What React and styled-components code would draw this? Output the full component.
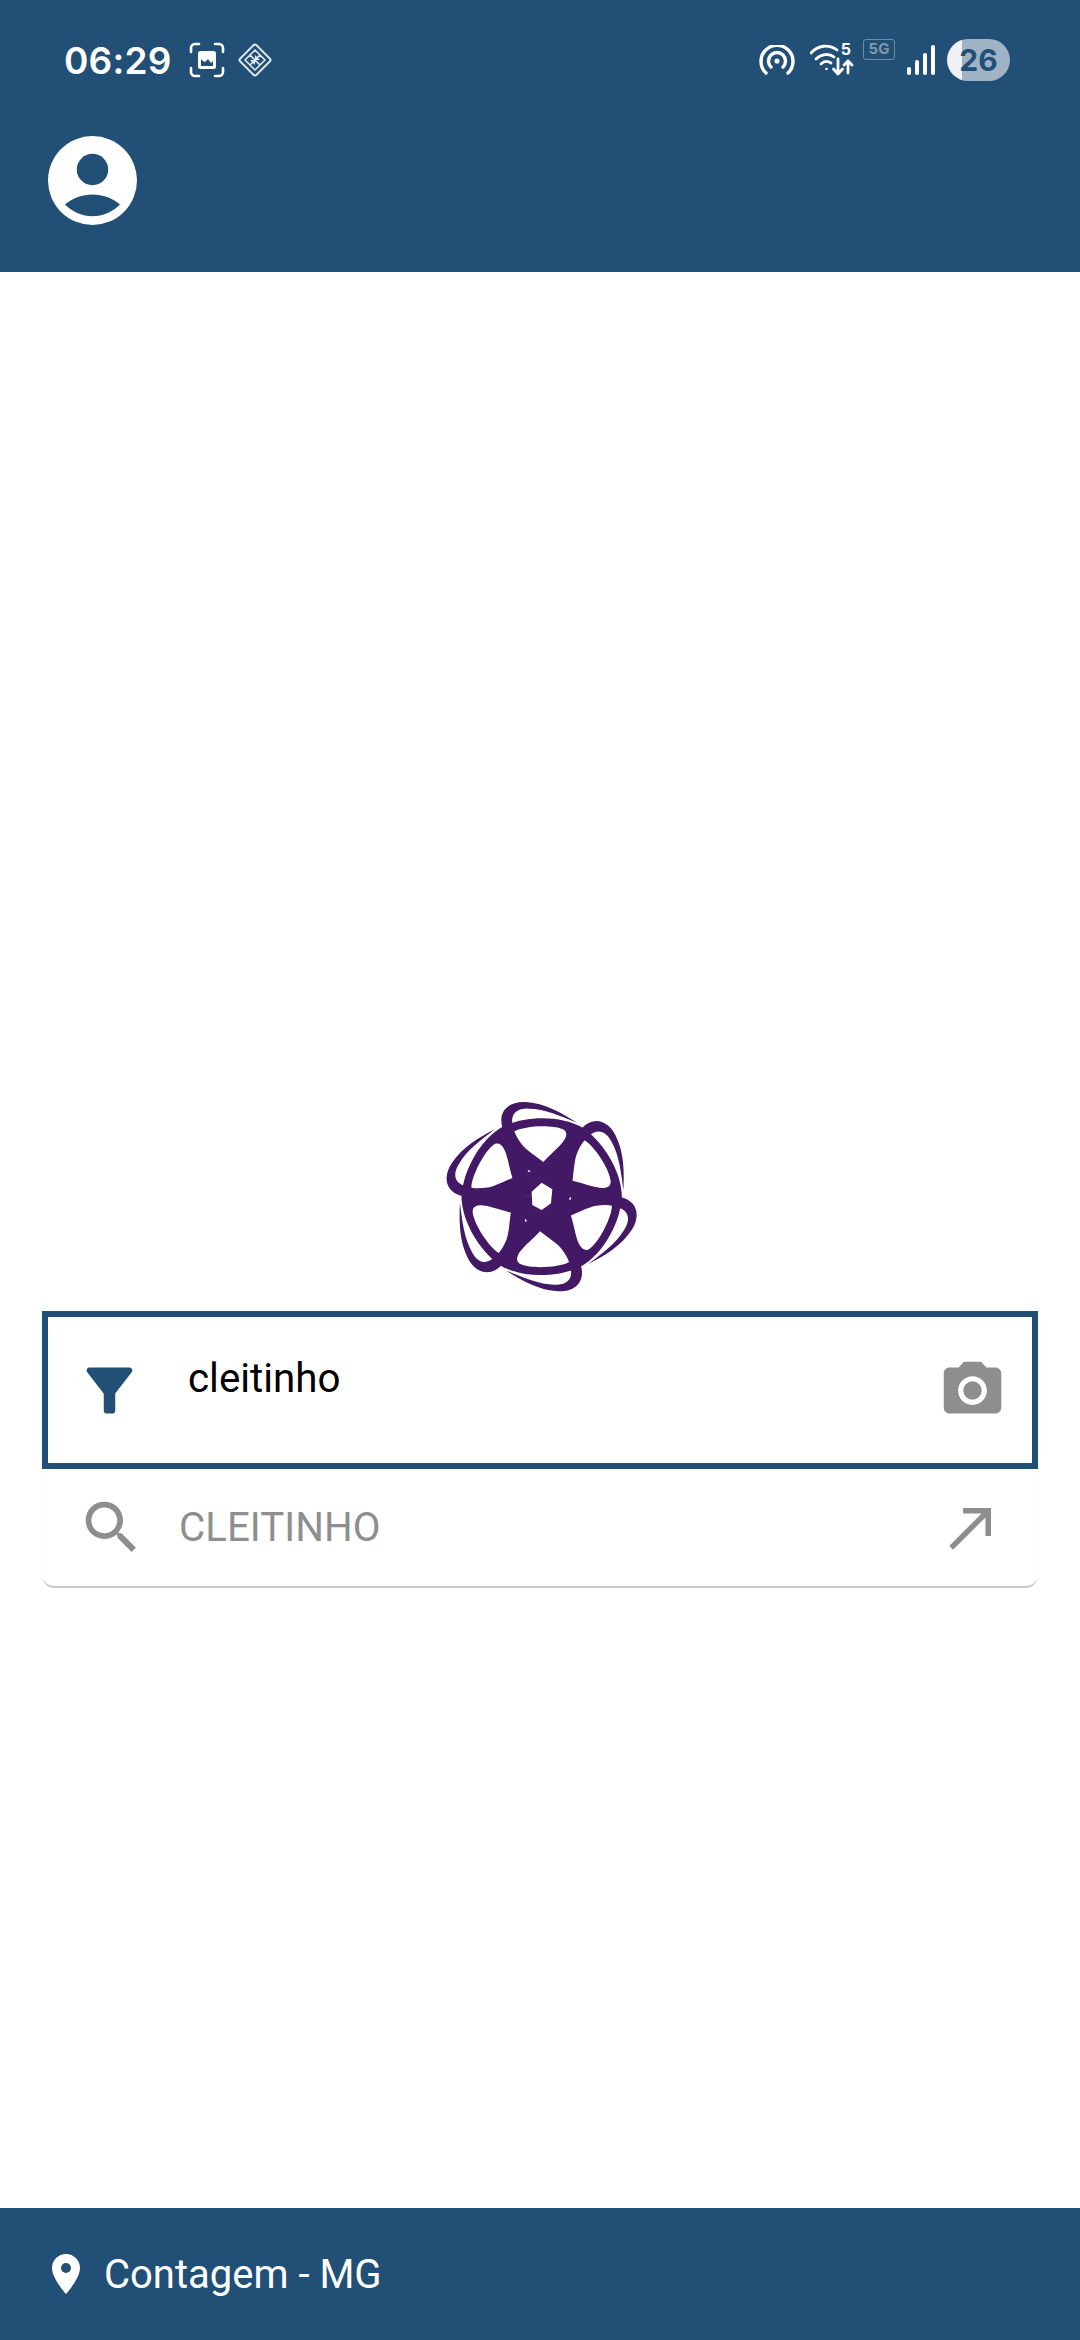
import React from 'react';
import styled, { createGlobalStyle } from 'styled-components';
import { MdFilterAlt, MdLocationOn, MdNorthEast, MdPhotoCamera, MdSearch } from 'react-icons/md';

const BLUE = '#214f75';
const GREY = '#8e8e8e';
const PURPLE = '#431865';

const GlobalStyle = createGlobalStyle`
  html, body {
    margin: 0;
    padding: 0;
    background: #fff;
    font-family: Roboto, "Liberation Sans", sans-serif;
  }
`;

const Page = styled.div`
  width: 1080px;
  height: 2340px;
  display: flex;
  flex-direction: column;
  background: #fff;
  overflow: hidden;
`;

const Header = styled.header`
  height: 272px;
  flex: none;
  background: ${BLUE};
  color: #fff;
`;

const StatusBar = styled.div`
  height: 52px;
  padding: 34px 70px 0 64px;
  display: flex;
  align-items: center;
  justify-content: space-between;
`;

const StatusGroup = styled.div`
  display: flex;
  align-items: center;
  gap: ${(p) => p.$gap}px;
`;

const Clock = styled.span`
  font-family: Inter, "Liberation Sans", sans-serif;
  font-size: 37px;
  font-weight: 600;
  letter-spacing: 0.2px;
  margin-right: 6px;
`;

const WifiCluster = styled.div`
  position: relative;
  width: 44px;
  height: 36px;
  margin-left: 15px;
`;

const WifiLabel = styled.span`
  position: absolute;
  top: -2px;
  right: 3px;
  font-family: Inter, "Liberation Sans", sans-serif;
  font-size: 16px;
  font-weight: 700;
  line-height: 18px;
`;

const NetworkTag = styled.span`
  width: 32px;
  height: 21px;
  box-sizing: border-box;
  margin: -21px 12px 0 9px;
  border: 1.5px solid #6f8ca5;
  border-radius: 3px;
  color: #7c97ae;
  font-family: Inter, "Liberation Sans", sans-serif;
  font-size: 15px;
  font-weight: 700;
  line-height: 18px;
  text-align: center;
`;

const Battery = styled.div`
  width: 63px;
  height: 42px;
  margin-left: 12px;
  border-radius: 21px;
  background: linear-gradient(90deg, #eef2f6 0, #eef2f6 15px, #a0b3c4 15px);
  color: ${BLUE};
  font-family: Inter, "Liberation Sans", sans-serif;
  font-size: 30px;
  font-weight: 700;
  line-height: 42px;
  text-align: center;
`;

const AvatarRow = styled.div`
  padding: 50px 0 0 48px;
  display: flex;
`;

const Main = styled.main`
  flex: 1;
  padding: 825px 42px 0;
  display: flex;
  flex-direction: column;
  align-items: stretch;
`;

const LogoBox = styled.div`
  height: 200px;
  margin-bottom: 14px;
  display: flex;
  justify-content: center;
`;

const SearchBox = styled.div`
  position: relative;
  height: 158px;
  box-sizing: border-box;
  padding: 0 25px 0 27px;
  border: 6px solid ${BLUE};
  background: #fff;
  display: flex;
  align-items: center;
`;

const SearchText = styled.div`
  flex: 1;
  margin-left: 44px;
  padding-bottom: 22px;
  color: #000;
  font-size: 40.3px;
  line-height: 48px;
`;

const Suggestion = styled.div`
  height: 117px;
  box-sizing: border-box;
  padding: 0 33px 0 35px;
  border-radius: 12px;
  box-shadow: 0 0 1px rgba(0, 0, 0, 0.12), 0 3px 1px -1px #c8c8c8;
  display: flex;
  align-items: center;
`;

const SuggestionText = styled.div`
  flex: 1;
  margin-left: 33px;
  color: ${GREY};
  font-size: 40.3px;
  line-height: 48px;
`;

const Footer = styled.footer`
  height: 132px;
  flex: none;
  box-sizing: border-box;
  padding-left: 42px;
  background: ${BLUE};
  color: #fff;
  display: flex;
  align-items: center;
  gap: 14px;
  font-size: 40px;
`;

const ScreenshotIcon = () => (
  <svg width="36" height="36" viewBox="0 0 36 36" fill="none">
    <path d="M2 10V6a4 4 0 0 1 4-4h4M26 2h4a4 4 0 0 1 4 4v4M34 26v4a4 4 0 0 1-4 4h-4M10 34H6a4 4 0 0 1-4-4v-4" stroke="#fff" strokeWidth="2.6" strokeLinecap="round" />
    <path fillRule="evenodd" d="M11.500 9h13a2.500 2.500 0 0 1 2.500 2.500v13a2.500 2.500 0 0 1-2.500 2.500h-13A2.500 2.500 0 0 1 9 24.500v-13A2.500 2.500 0 0 1 11.500 9zM12 17v7h12v-5l-2 2-3-4-3 3-2-1z" fill="#fff" />
  </svg>
);

const DiamondIcon = () => (
  <svg width="38" height="38" viewBox="0 0 38 38" fill="none" stroke="#e6edf3">
    <rect x="7.500" y="7.500" width="23" height="23" rx="2" transform="rotate(45 19 19)" strokeWidth="2" />
    <path d="M19 9l5 5-5 5-5-5zM19 19l5 5-5 5-5-5zM9 19l5-5 5 5-5 5zM19 19l5-5 5 5-5 5z" strokeWidth="1.500" />
    <path d="M14 19l5 5v-5zM24 19l-5-5v5z" fill="#e6edf3" stroke="none" />
  </svg>
);

const HotspotIcon = () => (
  <svg width="36" height="30" viewBox="0 0 36 30" fill="none" stroke="#fff" strokeWidth="3.400" strokeLinecap="round">
    <path d="M7 28a16 16 0 1 1 22 0" />
    <path d="M12 22a8.500 8.500 0 1 1 12 0" />
    <circle cx="18" cy="16" r="1.800" fill="#fff" strokeWidth="1.500" />
  </svg>
);

const WifiIcon = () => (
  <svg width="44" height="36" viewBox="0 0 44 36" fill="none" stroke="#fff" strokeWidth="2.800" strokeLinecap="round" strokeLinejoin="round">
    <path d="M1 11C8 3 19 2 27 8" />
    <path d="M6 17c5-5 13-6 18-2" />
    <path d="M11 22c3-3 7-3 10-1" />
    <circle cx="16.500" cy="27" r="1.300" fill="#fff" stroke="none" />
    <path d="M28 17v14M23.500 27l4.500 5 4.500-5M38 31V19M34 23l4-4 4 4" />
  </svg>
);

const SignalIcon = () => (
  <svg width="28" height="30" viewBox="0 0 28 30" fill="#fff">
    <rect x="0" y="22" width="4" height="8" rx="2" />
    <rect x="8" y="15" width="4" height="15" rx="2" />
    <rect x="16" y="8" width="4" height="22" rx="2" />
    <rect x="24" y="0" width="4" height="30" rx="2" />
  </svg>
);

const AvatarIcon = () => (
  <svg width="89" height="89" viewBox="0 0 89 89">
    <circle cx="44.500" cy="44.500" r="44.500" fill="#fff" />
    <circle cx="44.500" cy="33.500" r="15.700" fill={BLUE} />
    <path d="M17 68.500C32 55 57 55 72 68.500C57 84 32 84 17 68.500Z" fill={BLUE} />
  </svg>
);

const ROTATIONS = [0, 60, 120, 180, 240, 300];
const SPECKS = [0, 120, 240];

// one arm of the mark, repeated six times round the centre
const LogoMark = () => (
  <svg width="200" height="200" viewBox="-305 -299 600 600">
    <g fill={PURPLE}>
      {ROTATIONS.map((angle) => (
        <g key={angle} transform={`rotate(${angle})`}>
          <path d="M0 0L-118-208C-70-238 50-252 128-204Z" />
          <path d="M-118-208C-132-258-96-286-50-284C10-281 62-250 106-222C58-242 8-264-38-264C-76-266-96-246-86-212Z" />
        </g>
      ))}
    </g>
    <g fill="#fff">
      {ROTATIONS.map((angle) => (
        <path
          key={angle}
          transform={`rotate(${angle})`}
          d="M5-104C-18-122-46-140-58-155C-70-170-78-184-82-196C-55-212 28-218 62-203C74-198 76-188 72-178C64-156 28-130 5-104Z"
        />
      ))}
      <path d="M0-42L32-22L28 20L0 40L-28 25L-30-15Z" />
      {SPECKS.map((angle) => (
        <ellipse key={angle} cx="-38" cy="-77" rx="4" ry="2.500" transform={`rotate(${angle})`} />
      ))}
    </g>
  </svg>
);

export default function App() {
  return (
    <Page>
      <GlobalStyle />
      <Header>
        <StatusBar>
          <StatusGroup $gap={11}>
            <Clock>06:29</Clock>
            <ScreenshotIcon />
            <DiamondIcon />
          </StatusGroup>
          <StatusGroup $gap={0}>
            <HotspotIcon />
            <WifiCluster>
              <WifiIcon />
              <WifiLabel>5</WifiLabel>
            </WifiCluster>
            <NetworkTag>5G</NetworkTag>
            <SignalIcon />
            <Battery>26</Battery>
          </StatusGroup>
        </StatusBar>
        <AvatarRow>
          <AvatarIcon />
        </AvatarRow>
      </Header>
      <Main>
        <LogoBox>
          <LogoMark />
        </LogoBox>
        <SearchBox>
          <MdFilterAlt size={69} color={BLUE} />
          <SearchText>cleitinho</SearchText>
          <MdPhotoCamera size={69} color={GREY} />
        </SearchBox>
        <Suggestion>
          <MdSearch size={69} color={GREY} />
          <SuggestionText>CLEITINHO</SuggestionText>
          <MdNorthEast size={67} color={GREY} />
        </Suggestion>
      </Main>
      <Footer>
        <MdLocationOn size={48} />
        <span>Contagem - MG</span>
      </Footer>
    </Page>
  );
}
